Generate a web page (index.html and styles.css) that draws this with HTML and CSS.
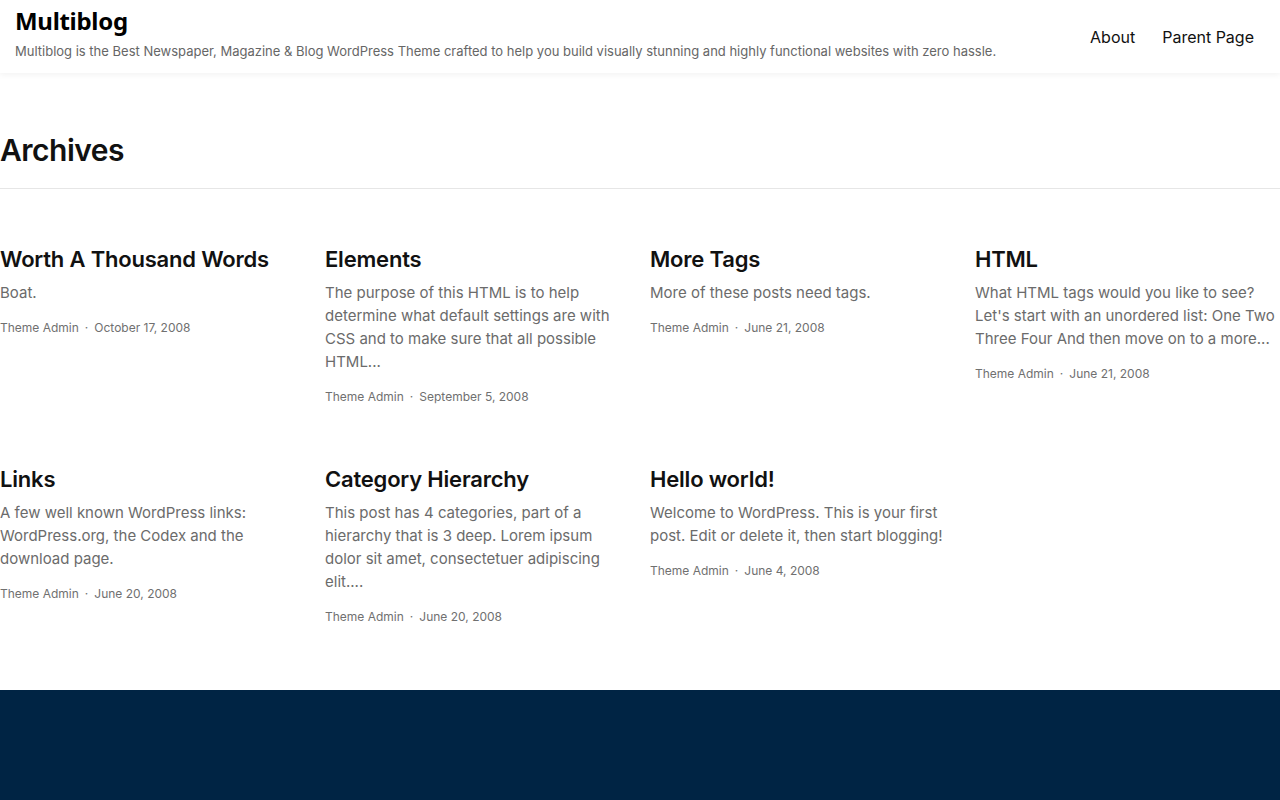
FILE: index.html
```html
<!DOCTYPE html>
<html lang="en">
<head>
<meta charset="utf-8">
<title>Archives – Multiblog</title>
<link rel="stylesheet" href="styles.css">
</head>
<body>
<header class="site-header">
  <div class="branding">
    <div class="site-title">Multiblog</div>
    <div class="tagline">Multiblog is the Best Newspaper, Magazine &amp; Blog WordPress Theme crafted to help you build visually stunning and highly functional websites with zero hassle.</div>
  </div>
  <nav class="nav">
    <a href="#">About</a>
    <a href="#">Parent Page</a>
  </nav>
</header>
<main class="main">
  <div class="page-head"><h1>Archives</h1></div>
  <div class="grid">
    <article class="post">
      <h2>Worth A Thousand Words</h2>
      <p>Boat.</p>
      <div class="meta"><span>Theme Admin</span><span class="dot">·</span><span>October 17, 2008</span></div>
    </article>
    <article class="post">
      <h2>Elements</h2>
      <p>The purpose of this HTML is to help determine what default settings are with CSS and to make sure that all possible HTML...</p>
      <div class="meta"><span>Theme Admin</span><span class="dot">·</span><span>September 5, 2008</span></div>
    </article>
    <article class="post">
      <h2>More Tags</h2>
      <p>More of these posts need tags.</p>
      <div class="meta"><span>Theme Admin</span><span class="dot">·</span><span>June 21, 2008</span></div>
    </article>
    <article class="post">
      <h2>HTML</h2>
      <p>What HTML tags would you like to see? Let's start with an unordered list: One Two Three Four And then move on to a more...</p>
      <div class="meta"><span>Theme Admin</span><span class="dot">·</span><span>June 21, 2008</span></div>
    </article>
    <article class="post">
      <h2>Links</h2>
      <p>A few well known WordPress links: WordPress.org, the Codex and the download page.</p>
      <div class="meta"><span>Theme Admin</span><span class="dot">·</span><span>June 20, 2008</span></div>
    </article>
    <article class="post">
      <h2>Category Hierarchy</h2>
      <p>This post has 4 categories, part of a hierarchy that is 3 deep. Lorem ipsum dolor sit amet, consectetuer adipiscing elit....</p>
      <div class="meta"><span>Theme Admin</span><span class="dot">·</span><span>June 20, 2008</span></div>
    </article>
    <article class="post">
      <h2>Hello world!</h2>
      <p>Welcome to WordPress. This is your first post. Edit or delete it, then start blogging!</p>
      <div class="meta"><span>Theme Admin</span><span class="dot">·</span><span>June 4, 2008</span></div>
    </article>
  </div>
</main>
<footer class="site-footer"></footer>
</body>
</html>
```

FILE: styles.css
```css
* { box-sizing: border-box; }
html, body { margin: 0; padding: 0; }
body {
  font-family: Inter, "Liberation Sans", sans-serif;
  color: #111;
  background: #fff;
}
.site-header {
  height: 73px;
  display: flex;
  align-items: center;
  justify-content: space-between;
  padding: 0 26px 0 15px;
  background: #fff;
  box-shadow: 0 2px 6px rgba(0,0,0,0.05);
  position: relative;
  z-index: 1;
}
.branding { display: flex; flex-direction: column; padding-bottom: 8px; }
.site-title {
  font-family: "Noto Sans", "Open Sans", sans-serif;
  font-weight: 700;
  font-size: 24px;
  line-height: 30px;
  color: #000;
  letter-spacing: -0.3px;
}
.tagline {
  font-size: 13px;
  line-height: 18px;
  color: #666;
  margin-top: 6px;
}
.nav { display: flex; gap: 27px; }
.nav a {
  color: #111;
  text-decoration: none;
  font-size: 16px;
  line-height: 20px;
}
.main { padding-bottom: 65px; }
.page-head {
  padding: 59px 0 20px;
  border-bottom: 1px solid #e6e6e6;
}
.page-head h1 {
  margin: 0;
  font-size: 30px;
  line-height: 36px;
  font-weight: 600;
  letter-spacing: -0.5px;
  color: #111;
}
.grid {
  display: grid;
  grid-template-columns: repeat(4, 1fr);
  column-gap: 20px;
  row-gap: 60px;
  padding-top: 56px;
}
.post h2 {
  margin: 0;
  font-size: 22px;
  line-height: 28px;
  font-weight: 600;
  letter-spacing: -0.2px;
  color: #111;
}
.post p {
  margin: 8px 0 0;
  font-size: 15px;
  line-height: 23px;
  color: #6b6b6b;
}
.meta {
  margin-top: 16px;
  font-size: 12px;
  line-height: 16px;
  color: #707070;
  display: flex;
  align-items: center;
}
.dot { margin: 0 6px; }
.site-footer {
  background: #002444;
  height: 120px;
}
```
